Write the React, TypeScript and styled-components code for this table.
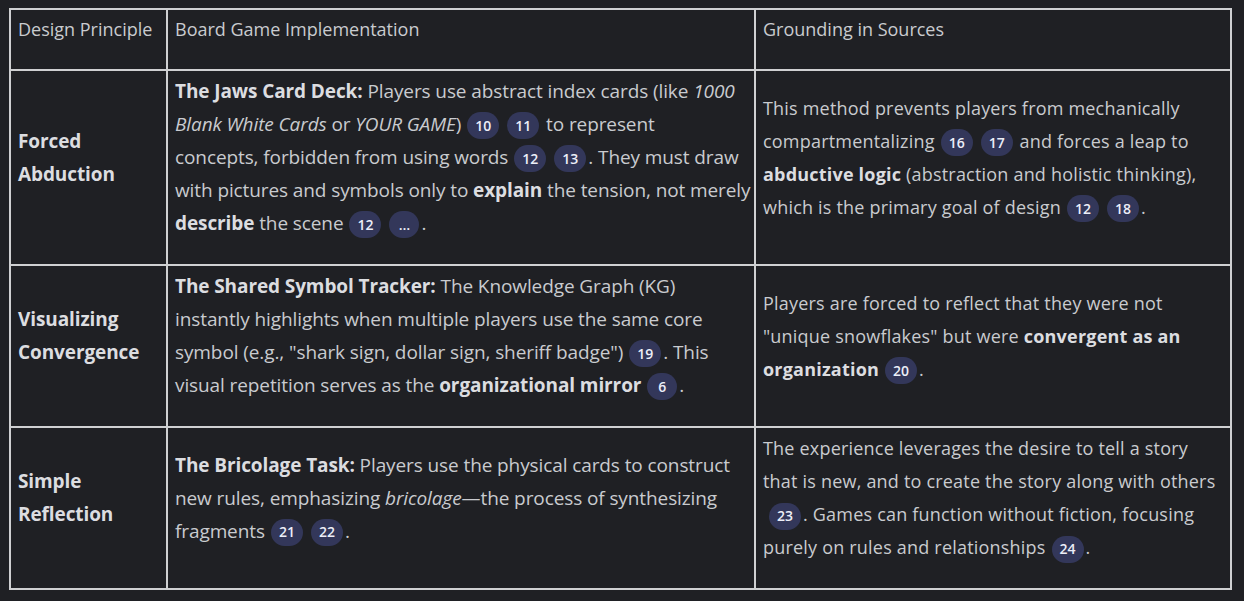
import React from "react";
import styled, { createGlobalStyle } from "styled-components";

const GlobalStyle = createGlobalStyle`
  html, body {
    margin: 0;
    background: #1f2024;
  }
  body {
    padding: 8px 14px 0 9px;
    font-family: "Open Sans", Roboto, "Liberation Sans", sans-serif;
  }
`;

const Table = styled.table`
  width: 1221px;
  border-collapse: collapse;
  table-layout: fixed;
  color: #c9cbcf;
  font-size: 18px;
  line-height: 33px;
`;

const HeadCell = styled.th`
  border: 2px solid #cfd0d2;
  padding: 3px 7px 0;
  text-align: left;
  vertical-align: top;
  font-weight: 400;
  height: 61px;
  box-sizing: border-box;
`;

const Strong = styled.b`
  font-weight: 700;
  color: #dcdde0;
`;

// $wide: the first two body columns render a touch larger in the source
const Cell = styled.td<{ $wide?: boolean }>`
  border: 2px solid #cfd0d2;
  padding: ${(p) => (p.$wide ? "4px 2px 4px 7px" : "4px 7px")};
  vertical-align: middle;
  font-size: ${(p) => (p.$wide ? "19px" : "18px")};
  letter-spacing: ${(p) => (p.$wide ? "-0.1px" : "0.2px")};
`;

const Para = styled.p`
  margin: 0 0 20px;
`;

const Chip = styled.span`
  display: inline-flex;
  align-items: center;
  justify-content: center;
  height: 27px;
  min-width: 30px;
  padding: 0 8px;
  box-sizing: border-box;
  margin: 0 2px 0 6px;
  border-radius: 14px;
  background: #33375a;
  color: #eceef8;
  font-size: 14px;
  font-weight: 600;
  letter-spacing: 0;
  line-height: 1;
  vertical-align: middle;
`;

function Cite({ n }: { n: string }) {
  return (
    <>
      <wbr />
      <Chip>{n}</Chip>
    </>
  );
}

const rows = [
  {
    principle: "Forced Abduction",
    impl: (
      <>
        <Strong>The Jaws Card Deck:</Strong> Players use abstract index cards (like <i>1000 Blank White Cards</i> or{" "}
        <i>YOUR GAME</i>)<Cite n="10" /><Cite n="11" /> to represent
        <br />
        concepts, forbidden from using words
        <Cite n="12" /><Cite n="13" />. They must draw with pictures and symbols only to <Strong>explain</Strong> the
        tension, not merely <Strong>describe</Strong> the scene<Cite n="12" /><Cite n="…" />.
      </>
    ),
    source: (
      <>
        This method prevents players from mechanically compartmentalizing<Cite n="16" /><Cite n="17" /> and forces a
        leap to <Strong>abductive logic</Strong> (abstraction and holistic thinking), which is the primary goal of
        design<Cite n="12" /><Cite n="18" />.
      </>
    ),
  },
  {
    principle: "Visualizing Convergence",
    impl: (
      <>
        <Strong>The Shared Symbol Tracker:</Strong> The Knowledge Graph (KG)
        <br />
        instantly highlights when multiple players use the same core symbol (e.g., "shark sign, dollar sign, sheriff
        badge")<Cite n="19" />. This visual repetition serves as the <Strong>organizational mirror</Strong>
        <Cite n="6" />.
      </>
    ),
    source: (
      <>
        Players are forced to reflect that they were not "unique snowflakes" but were{" "}
        <Strong>convergent as an organization</Strong>
        <Cite n="20" />.
      </>
    ),
  },
  {
    principle: "Simple Reflection",
    impl: (
      <>
        <Strong>The Bricolage Task:</Strong> Players use the physical cards to construct new rules, emphasizing{" "}
        <i>bricolage</i>—the process of synthesizing fragments<Cite n="21" /><Cite n="22" />.
      </>
    ),
    source: (
      <>
        The experience leverages the desire to tell a story that is new, and to create the story along with others
        <Cite n="23" />. Games can function without fiction, focusing purely on rules and relationships
        <Cite n="24" />.
      </>
    ),
  },
];

export default function App() {
  return (
    <>
      <GlobalStyle />
      <Table>
        <colgroup>
          <col style={{ width: 157 }} />
          <col style={{ width: 588 }} />
          <col style={{ width: 476 }} />
        </colgroup>
        <thead>
          <tr>
            <HeadCell>Design Principle</HeadCell>
            <HeadCell>Board Game Implementation</HeadCell>
            <HeadCell>Grounding in Sources</HeadCell>
          </tr>
        </thead>
        <tbody>
          {rows.map((row) => (
            <tr key={row.principle}>
              <Cell $wide>
                <Para>
                  <Strong>{row.principle}</Strong>
                </Para>
              </Cell>
              <Cell $wide>
                <Para>{row.impl}</Para>
              </Cell>
              <Cell>
                <Para>{row.source}</Para>
              </Cell>
            </tr>
          ))}
        </tbody>
      </Table>
    </>
  );
}
